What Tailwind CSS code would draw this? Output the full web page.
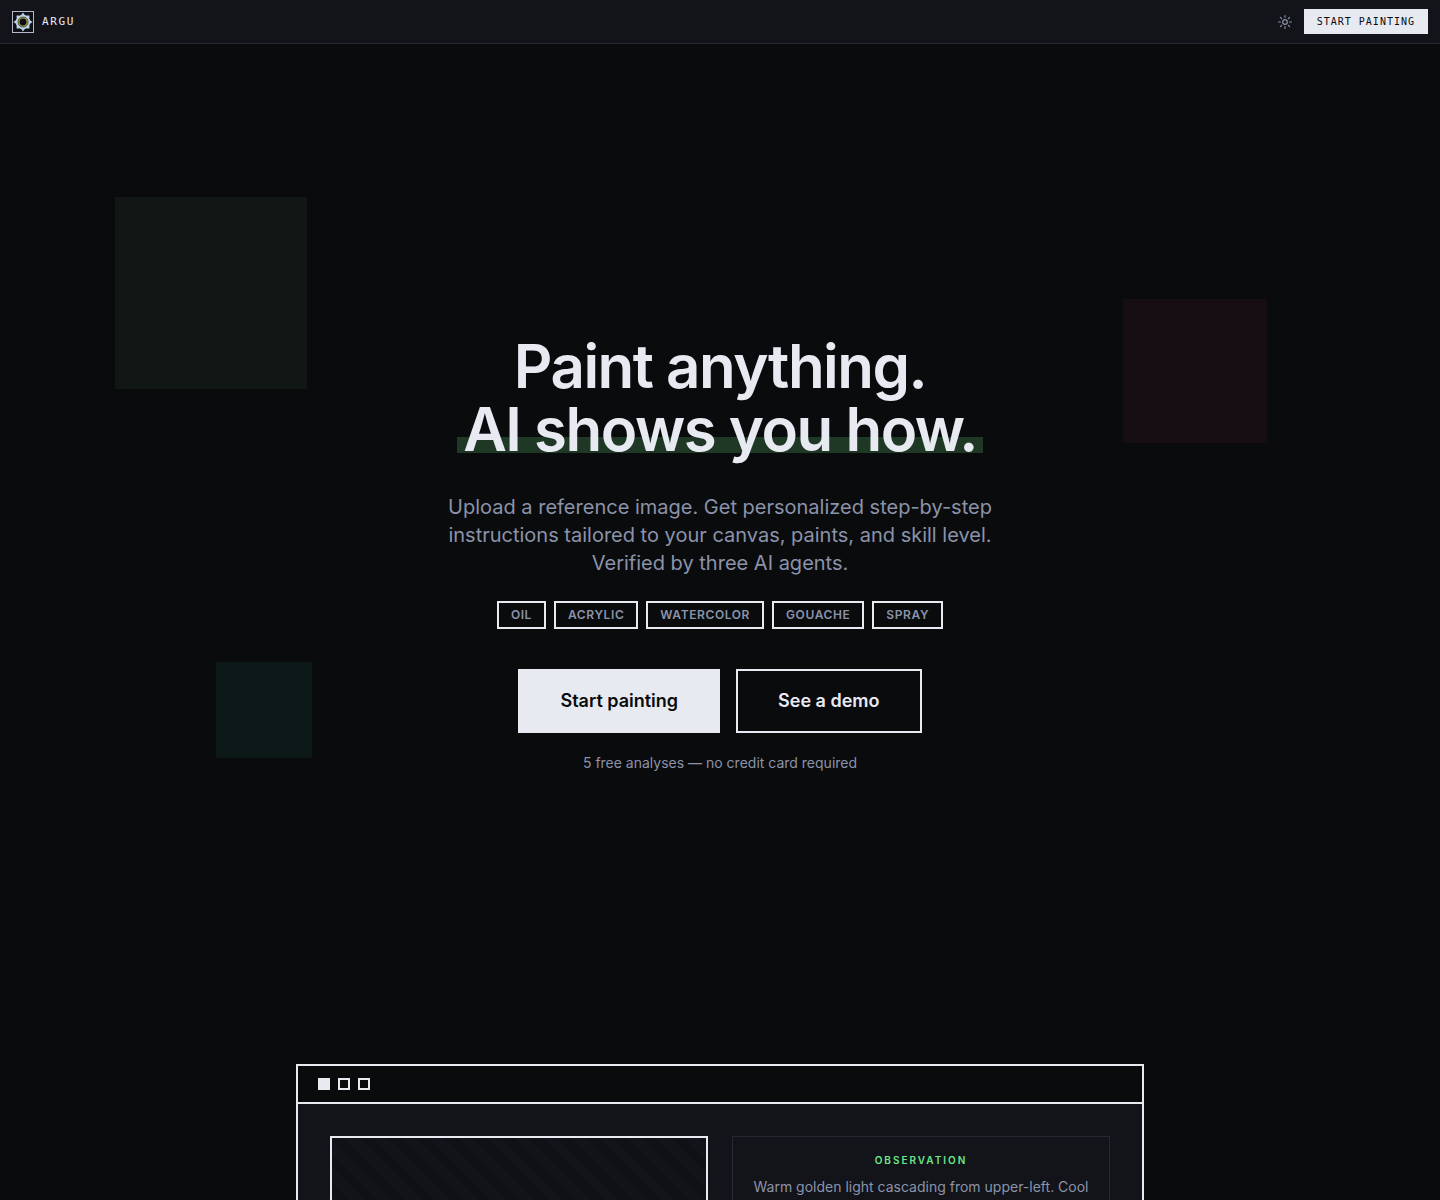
<!DOCTYPE html>
<html lang="en">
<head>
  <meta charset="UTF-8" />
  <title>Argu</title>
  <meta name="viewport" content="width=device-width, initial-scale=1.0" />
  <script src="https://cdn.jsdelivr.net/npm/@tailwindcss/browser@4"></script>
</head>
<body class="bg-[#0a0b0d] text-[#e8eaf2] font-['Inter',sans-serif] min-h-screen overflow-x-hidden">
  <!-- Nav -->
  <header class="h-11 px-3 flex items-center justify-between bg-[#13141a] border-b border-[#262833]">
    <a href="#" class="flex items-center gap-2">
      <svg class="w-[22px] h-[22px]" viewBox="0 0 22 22" fill="none" aria-hidden="true">
        <rect x="0.5" y="0.5" width="21" height="21" fill="#101116" stroke="#b4b9c9" />
        <circle cx="11" cy="11" r="7.300" fill="#b9d3e6" />
        <path d="M11 1.400L13.400 5H8.600ZM11 20.600L13.400 17H8.600ZM1.400 11L5 8.600V13.400ZM20.600 11L17 8.600V13.400Z" fill="#b9d3e6" />
        <path d="M4.600 4.600h2.600v2.600h-2.600zM14.800 4.600h2.600v2.600h-2.600zM4.600 14.800h2.600v2.600h-2.600zM14.800 14.800h2.600v2.600h-2.600z" fill="#b9d3e6" />
        <circle cx="11" cy="11" r="5" fill="#0c0d12" stroke="#3a3b2e" stroke-width="0.8" />
        <circle cx="11" cy="11" r="4.100" stroke="#9a9440" stroke-width="1.400" />
      </svg>
      <span class="font-['DejaVu_Sans_Mono',monospace] text-[11px] leading-[22px] tracking-[0.15em]">ARGU</span>
    </a>
    <div class="flex items-center gap-3">
      <button type="button" aria-label="Toggle theme" class="text-[#8b93a9]">
        <svg class="w-3.5 h-3.5" viewBox="0 0 24 24" fill="none" stroke="currentColor" stroke-width="2" stroke-linecap="round">
          <circle cx="12" cy="12" r="4" />
          <path d="M12 1v3M12 20v3M4.200 4.200l2 2M17.800 17.800l2 2M1 12h3M20 12h3M6.200 17.800l-2 2M19.800 4.200l-2 2" />
        </svg>
      </button>
      <a href="#" class="h-[25px] px-[13px] flex items-center bg-[#e8eaf2] text-[#0a0b0d] font-['DejaVu_Sans_Mono',monospace] text-[10px] tracking-[0.1em]">START PAINTING</a>
    </div>
  </header>

  <!-- Hero -->
  <section class="relative min-h-[85vh] px-6 flex flex-col items-center justify-center text-center">
    <div class="absolute top-[15%] left-[8%] w-48 h-48 bg-[#101714]"></div>
    <div class="absolute top-[25%] right-[12%] w-36 h-36 bg-[#160e12]"></div>
    <div class="absolute bottom-[30%] left-[15%] w-24 h-24 bg-[#0d1818]"></div>

    <h1 class="relative text-[60px] leading-[63px] font-semibold tracking-tight">
      Paint anything.<br />
      <span class="relative inline-block">
        <span class="absolute -inset-x-1.5 bottom-2 h-4 bg-[#1f3826]"></span>
        <span class="relative">AI shows you how.</span>
      </span>
    </h1>
    <p class="relative mt-8 max-w-xl text-xl leading-7 text-[#8b93a9]">
      Upload a reference image. Get personalized step-by-step instructions tailored to your canvas, paints, and skill level. Verified by three AI agents.
    </p>
    <ul class="relative mt-6 flex flex-wrap justify-center gap-2 text-xs font-semibold tracking-[0.05em] text-[#8b93a9]">
      <li class="px-3 py-1 border-2 border-[#e8eaf2]">OIL</li>
      <li class="px-3 py-1 border-2 border-[#e8eaf2]">ACRYLIC</li>
      <li class="px-3 py-1 border-2 border-[#e8eaf2]">WATERCOLOR</li>
      <li class="px-3 py-1 border-2 border-[#e8eaf2]">GOUACHE</li>
      <li class="px-3 py-1 border-2 border-[#e8eaf2]">SPRAY</li>
    </ul>
    <div class="relative mt-10 flex flex-wrap justify-center gap-4 text-lg font-semibold">
      <a href="#" class="h-16 px-10 flex items-center border-2 border-[#e8eaf2] bg-[#e8eaf2] text-[#0a0b0d]">Start painting</a>
      <a href="#demo" class="h-16 px-10 flex items-center border-2 border-[#e8eaf2]">See a demo</a>
    </div>
    <p class="relative mt-5 text-sm text-[#8b93a9]">5 free analyses — no credit card required</p>
  </section>

  <!-- Demo window -->
  <section id="demo" class="max-w-4xl mx-auto px-6 pb-24">
    <div class="border-2 border-[#e8eaf2] bg-[#13141a]">
      <div class="px-5 py-3 flex gap-2 border-b-2 border-[#e8eaf2] bg-[#0a0b0d]">
        <span class="w-3 h-3 bg-[#e8eaf2]"></span>
        <span class="w-3 h-3 border-2 border-[#e8eaf2]"></span>
        <span class="w-3 h-3 border-2 border-[#e8eaf2]"></span>
      </div>
      <div class="p-8 grid grid-cols-2 gap-6">
        <div class="min-h-72 border-2 border-[#e8eaf2] bg-[repeating-linear-gradient(45deg,#101115_0,#101115_10px,#13141a_10px,#13141a_20px)]"></div>
        <div>
          <div class="p-4 border border-[#262833] text-center">
            <h2 class="text-[10px] leading-[15px] font-semibold tracking-[0.2em] text-[#6ee787]">OBSERVATION</h2>
            <p class="mt-2 text-sm leading-[22px] text-[#8b93a9]">Warm golden light cascading from upper-left. Cool</p>
          </div>
        </div>
      </div>
    </div>
  </section>
</body>
</html>
